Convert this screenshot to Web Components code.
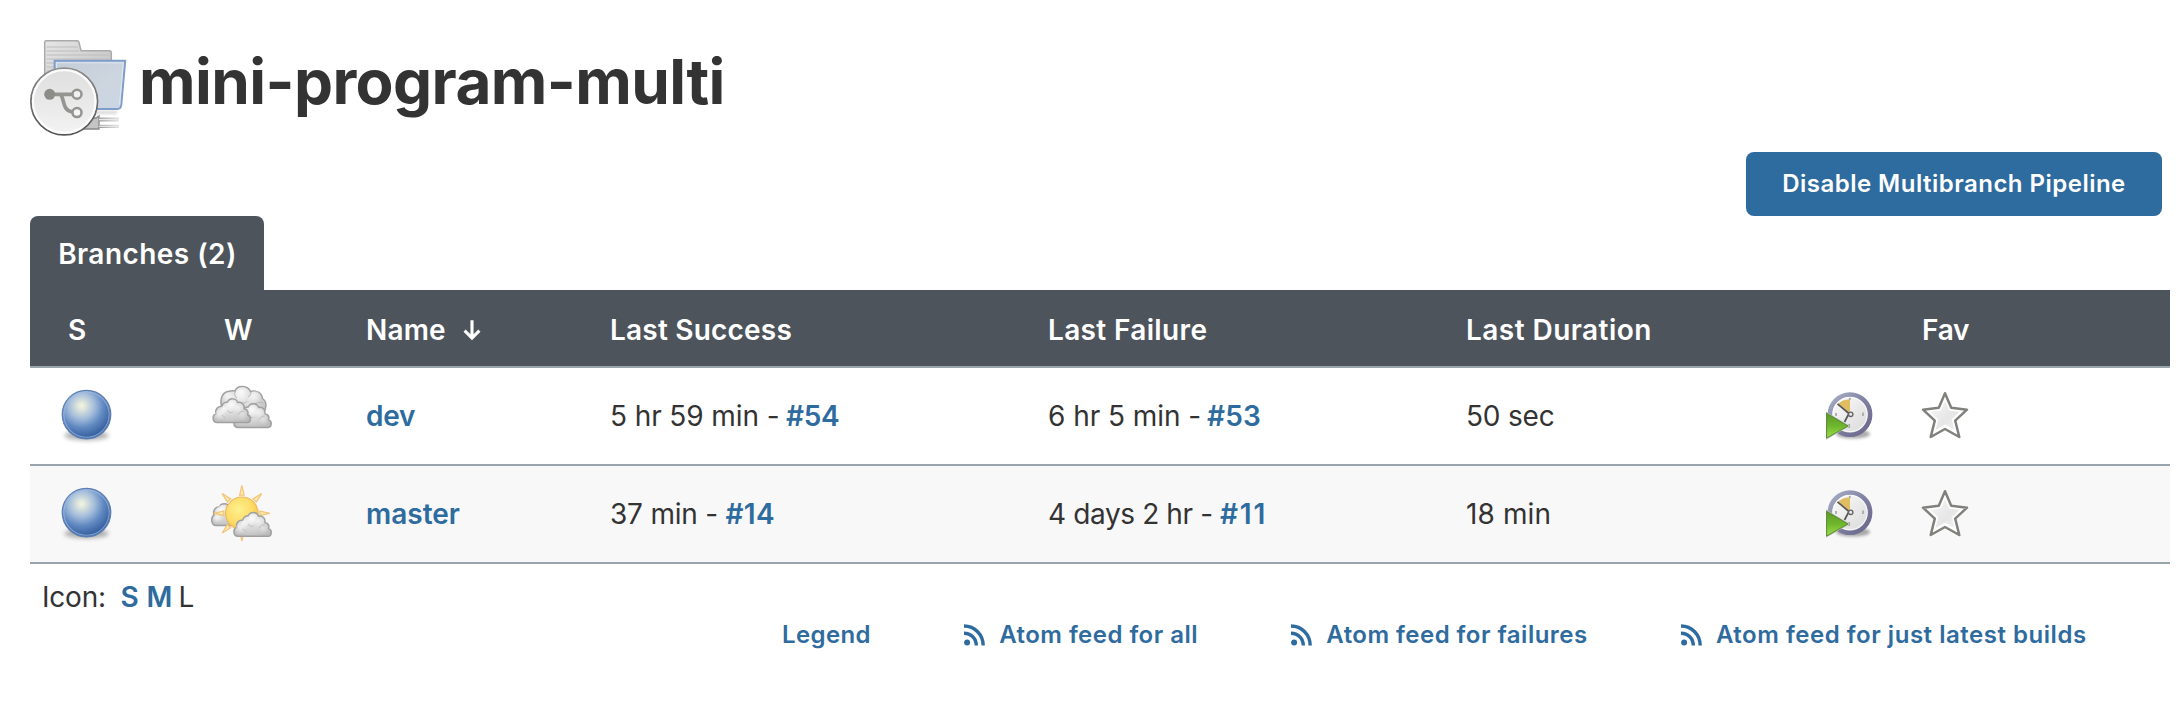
<!DOCTYPE html>
<html lang="en">
<head>
<meta charset="utf-8">
<title>mini-program-multi</title>
<style>
html, body { margin: 0; background: #fff; }
body { font-family: Inter, "Liberation Sans", sans-serif; font-size: 28px; color: #333; --link: #2e6b9e; --dark: #4d545c; --line: #98a5ad; }
</style>
</head>
<body>
<job-page></job-page>
<script>
const define = (name, html, setup) => {
  const template = document.createElement('template');
  template.innerHTML = html;
  customElements.define(name, class extends HTMLElement {
    connectedCallback() {
      if (this.shadowRoot) return;
      this.attachShadow({ mode: 'open' }).append(template.content.cloneNode(true));
      if (setup) setup(this, this.shadowRoot);
    }
  });
};

/* ---------- icons ---------- */
const icon = (name, w, h, body) => define(name,
  `<style>:host{display:block;flex:none;width:${w}px;height:${h}px}svg{display:block;overflow:visible}</style>
   <svg width="${w}" height="${h}" viewBox="0 0 ${w} ${h}" fill="none">${body}</svg>`);

icon('icon-folder', 96, 96, `
  <defs>
    <linearGradient id="back" x1="0" y1="0" x2="1" y2="1"><stop offset="0" stop-color="#e6e6e6"/><stop offset="1" stop-color="#b9b9b9"/></linearGradient>
    <linearGradient id="front" x1="0" y1="0" x2="1" y2="1"><stop offset="0" stop-color="#c4ccd8"/><stop offset=".6" stop-color="#cdd5df"/><stop offset="1" stop-color="#cad6e6"/></linearGradient>
    <linearGradient id="disc" x1="0" y1="0" x2="0" y2="1"><stop offset="0" stop-color="#dedede"/><stop offset="1" stop-color="#f3f3f3"/></linearGradient>
    <linearGradient id="rim" x1="0" y1="0" x2="0" y2="1"><stop offset="0" stop-color="#8c8c8c"/><stop offset="1" stop-color="#555"/></linearGradient>
    <linearGradient id="cable" x1="0" y1="0" x2="1" y2="0"><stop offset="0" stop-color="#999"/><stop offset="1" stop-color="#e4e4e4"/></linearGradient>
    <filter id="soft" x="-20%" y="-60%" width="140%" height="220%"><feGaussianBlur stdDeviation="1.6"/></filter>
  </defs>
  <path d="M30 71H88L86 74H34Z" fill="#777" opacity=".3" filter="url(#soft)"/>
  <path d="M14.7 60V2.2Q14.7.8 16.2.8H47Q48.6.8 49 2.4L51 10.7H79.5Q81.3 10.7 81.3 12.5V34H40V60Z" fill="url(#back)" stroke="#aaa" stroke-width="1.5"/>
  <path d="M16.5 7H48M16.5 11H49M16.5 15H79M16.5 19H79M16.5 23H26M16.5 27H26M16.5 31H24" stroke="#bdbdbd" stroke-width="1.2"/>
  <path d="M24.6 20.8H95.2L91.3 65Q90.8 69 87.5 69H24.6Z" fill="url(#front)" stroke="#7f9dcb" stroke-width="2"/>
  <path d="M26.5 62V22.8H93.2L89.6 64.6" stroke="#dfe6ef" stroke-width="1.1"/>
  <path d="M54 78H66L69 76V89H50Z" fill="#c4c4c4" stroke="#888" stroke-width="1.3"/>
  <rect x="69" y="77.500" width="20" height="4" fill="url(#cable)"/><rect x="69" y="84.800" width="20" height="3.200" fill="url(#cable)"/>
  <rect x="69" y="78.800" width="20" height="1.400" fill="#e9e9e9"/><rect x="69" y="85.700" width="20" height="1.200" fill="#e9e9e9"/>
  <circle cx="34.2" cy="61.5" r="33.3" fill="url(#disc)" stroke="url(#rim)" stroke-width="1.8"/>
  <circle cx="34.2" cy="61.5" r="31.3" stroke="#fff" stroke-width="2.2" opacity=".85"/>
  <path d="M20 54.3H42M30.500 54.5C34.500 58 32 71 42.5 72" stroke="#949490" stroke-width="3.700"/>
  <circle cx="19.7" cy="54.3" r="5.500" fill="#8c8c89"/>
  <circle cx="47" cy="54.3" r="4.5" fill="#f1f1f1" stroke="#949490" stroke-width="2.5"/>
  <circle cx="47" cy="72.6" r="4.5" fill="#f5f5f5" stroke="#949490" stroke-width="2.5"/>`);

icon('icon-ball', 64, 64, `
  <defs>
    <radialGradient id="g" cx=".4" cy=".32" r=".66"><stop offset="0" stop-color="#f5f5df"/><stop offset=".12" stop-color="#dfe6dc"/><stop offset=".4" stop-color="#a3bddb"/><stop offset=".68" stop-color="#6189c1"/><stop offset="1" stop-color="#355f9e"/></radialGradient>
    <filter id="s" x="-20%" y="-50%" width="140%" height="200%"><feGaussianBlur stdDeviation="2"/></filter>
  </defs>
  <ellipse cx="32.5" cy="51.5" rx="22" ry="5" fill="#666" opacity=".5" filter="url(#s)"/>
  <circle cx="32.5" cy="30.6" r="24.3" fill="url(#g)" stroke="#5e7fb3" stroke-width="1.2"/>
  <circle cx="32.5" cy="30.6" r="22.7" stroke="#9ebbe2" stroke-width="1.1" opacity=".7"/>`);

const cloudDefs = `
  <radialGradient id="c" cx=".42" cy=".3" r=".75"><stop offset="0" stop-color="#ececec"/><stop offset=".55" stop-color="#d6d6d6"/><stop offset="1" stop-color="#bcbcbc"/></radialGradient>
  <radialGradient id="p" cx=".4" cy=".35" r=".6"><stop offset="0" stop-color="#fff"/><stop offset="1" stop-color="#fff" stop-opacity="0"/></radialGradient>`;
/* one cumulus, 38 x 25 */
const cloud = (x, y) => `<g transform="translate(${x} ${y})">
  <path d="M4.5 24.3C-.5 24-.7 16.5 3.4 15.6C2.2 11 5.5 7.5 9.3 8.3C10.2 4 13.5 3.6 15 4C16.5-.6 23.5-.6 25 4.2C29.5 3.4 32 6.5 31.6 10.5C35.5 11 36 14.5 35 16.4C39.3 18 38.3 24 34.8 24.3Z" fill="url(#c)" stroke="#a0a09e" stroke-width="1.5"/>
  <circle cx="8" cy="17" r="6" fill="url(#p)" opacity=".6"/><circle cx="20" cy="8" r="6.5" fill="url(#p)" opacity=".8"/><circle cx="12" cy="12" r="4.5" fill="url(#p)" opacity=".7"/><circle cx="27" cy="11" r="5" fill="url(#p)" opacity=".5"/><circle cx="31" cy="18" r="5" fill="url(#p)" opacity=".35"/>
  <path d="M15 12C16 14.5 18.5 15 20 13.8M26 16C27 13.5 29 12.6 31 13.2M9 17.5C11 17 12 18.5 12 20" stroke="#bbb" stroke-width=".9"/></g>`;

icon('icon-cloudy', 64, 64, `<defs>${cloudDefs}</defs>
  <path d="M11.500 22C9.500 14 13 8 19 7.2C22 6.4 24 7 25 7C27 .8 38 .8 40.5 7.500C46 5.500 52 9 52.5 14.500C55.500 16.500 57 20 55 26L45 36H18Z" fill="url(#c)" stroke="#a0a09e" stroke-width="1.5"/>
  <circle cx="32.5" cy="10" r="7" fill="url(#p)" opacity=".8"/><circle cx="19" cy="14" r="6" fill="url(#p)" opacity=".7"/><circle cx="45" cy="14" r="7" fill="url(#p)" opacity=".7"/>
  <path d="M25 8C24 10 25 13 27 14M41 8C41 10 40 12 38 13M31 18C33 20 36 19 37 17M44 21C47 18 50 18 53 19" stroke="#b6b6b6" stroke-width="1"/>
  ${cloud(23.4, 19.2)}${cloud(2.6, 14.3)}`);

const rays = [0, 45, 90, 135, 180, 225, 270, 315].map(a =>
  `<path transform="rotate(${a} 31.9 31.3)" d="M29.6 13.2L31.9 3.4L34.2 13.2Z" fill="#fde9a5" stroke="#f2c47c" stroke-width="1.2"/>`).join('');
icon('icon-partly-sunny', 64, 64, `<defs>${cloudDefs}
    <radialGradient id="sun" cx=".4" cy=".38" r=".7"><stop offset="0" stop-color="#fff08e"/><stop offset=".6" stop-color="#fbdc66"/><stop offset="1" stop-color="#f5c04e"/></radialGradient></defs>
  <path d="M6 43.6C1 43.5.5 35 4 33.5C2.5 28 6 24.5 9.5 25C10.500 20.500 18 20.500 19.500 25L26 43.600Z" fill="url(#c)" stroke="#a0a09e" stroke-width="1.5"/>
  <circle cx="12" cy="29" r="6" fill="url(#p)" opacity=".8"/><circle cx="8" cy="37" r="5" fill="url(#p)" opacity=".7"/>
  ${rays}
  <circle cx="31.9" cy="31.3" r="16.3" fill="url(#sun)" stroke="#f1b75c" stroke-width="1.1"/>
  ${cloud(23.4, 30)}`);

icon('icon-schedule', 48, 48, `
  <defs>
    <linearGradient id="r" x1="0" y1="0" x2="1" y2="1"><stop offset="0" stop-color="#a9b0c6"/><stop offset=".5" stop-color="#8081a3"/><stop offset="1" stop-color="#686589"/></linearGradient>
    <linearGradient id="f" x1="0" y1="0" x2="1" y2="1"><stop offset="0" stop-color="#fff"/><stop offset="1" stop-color="#d6d6d6"/></linearGradient>
    <linearGradient id="t" x1="0" y1="0" x2="0" y2="1"><stop offset="0" stop-color="#5d9a2b"/><stop offset=".5" stop-color="#6fb52c"/><stop offset="1" stop-color="#9ae04a"/></linearGradient>
    <filter id="s" x="-20%" y="-60%" width="140%" height="220%"><feGaussianBlur stdDeviation="1.7"/></filter>
  </defs>
  <ellipse cx="27" cy="42" rx="17" ry="4.500" fill="#555" opacity=".5" filter="url(#s)"/>
  <circle cx="24" cy="22.600" r="20" fill="url(#f)" stroke="url(#r)" stroke-width="4.800"/>
  <circle cx="24" cy="22.600" r="17.200" stroke="#fff" stroke-width="1.200" opacity=".8"/>
  <path d="M24 21.500V7.400C19.500 7.200 15 8.800 12.300 11.500Z" fill="#dfbd60"/>
  <path d="M11.500 11.800L23 21.500L18.500 30" stroke="#555" stroke-width="1.700"/>
  <circle cx="24.700" cy="22.300" r="2.200" fill="#eee" stroke="#666" stroke-width="1.400"/>
  <path d="M37 20.500V24M23.200 32V36M10 21V24M23.800 5.800V8" stroke="#aaa" stroke-width="1.800"/>
  <path d="M0 19.500L23.800 34L0 47.700Z" fill="#b7bfb0"/>
  <path d="M.6 21.300L22 34L.6 46Z" fill="url(#t)" stroke="#55852f" stroke-width=".9"/>`);

icon('icon-star', 48, 48, `
  <defs><linearGradient id="g" x1="0" y1="0" x2="1" y2="1"><stop offset="0" stop-color="#f7f7f7"/><stop offset=".6" stop-color="#e6e6e6"/><stop offset="1" stop-color="#f2f2f2"/></linearGradient></defs>
  <path d="M23 1.200L29.200 15.800L45 17.700L33.200 28.600L37.300 45L23 37L8.700 45L12.800 28.600L1 17.700L16.800 15.800Z" fill="#fff" stroke="#80807c" stroke-width="2.500" stroke-linejoin="round"/>
  <path d="M23 9L27.200 18.500L37.500 19.800L29.800 27.300L32.500 38L23 32.500L13.500 38L16.200 27.300L8.500 19.800L18.800 18.500Z" fill="url(#g)"/>`);

icon('icon-feed', 21, 22, `
  <circle cx="3.100" cy="18.500" r="3" fill="var(--link)"/>
  <path d="M0 9.200C7 9.200 12.300 14.500 12.300 21.500M0 2C10.800 2 19.200 10.700 19.200 21.500" stroke="var(--link)" stroke-width="3.400"/>`);

icon('icon-arrow-down', 18, 20, `<path d="M9 .3V17.500M1.600 10.700L9 18.100L16.400 10.700" stroke="#fff" stroke-width="3.100"/>`);

/* ---------- text with optional tracking ---------- */
define('ui-text', `<style>:host{display:inline-block;white-space:pre}</style><slot></slot>`, el => {
  const track = el.getAttribute('track'), width = el.getAttribute('width');
  if (track) el.style.letterSpacing = track + 'px';
  if (width) el.style.width = width + 'px';
});
define('ui-link', `<style>:host{display:inline-block;white-space:pre}a{color:var(--link);font-weight:600;text-decoration:none}</style><a href="#"><slot></slot></a>`, el => {
  const track = el.getAttribute('track');
  if (track) el.style.letterSpacing = track + 'px';
});

/* ---------- page parts ---------- */
define('job-heading', `<style>
  :host{display:flex;align-items:center;height:96px}
  h1{margin:-12px 0 0 13px;font-size:62px;line-height:72px;font-weight:700;letter-spacing:-.58px;white-space:nowrap}
  </style><slot name="icon"></slot><h1><slot></slot></h1>`);

define('primary-button', `<style>
  :host{display:block}
  button{display:block;box-sizing:border-box;width:416px;height:64px;padding:0 0 1px;border:0;border-radius:8px;background:var(--link);color:#fff;font:600 24px Inter,"Liberation Sans",sans-serif;letter-spacing:.48px;white-space:nowrap}
  </style><button><slot></slot></button>`);

define('view-tab', `<style>
  :host{display:flex;align-items:center;justify-content:center;box-sizing:border-box;width:234px;height:74px;padding:1px 0 0 1px;border-radius:8px 8px 0 0;background:var(--dark);color:#fff;font-weight:600;letter-spacing:.45px;white-space:nowrap}
  </style><slot></slot>`);

const columns = `display:grid;grid-template-columns:156px 156px 244px 438px 418px 360px 96px 1fr;align-items:center;box-sizing:border-box;padding-left:24px;border-bottom:2px solid var(--line)`;
define('branch-header', `<style>
  :host{${columns};height:78px;padding-top:3px;background:var(--dark);color:#fff;font-weight:600;white-space:nowrap}
  .s{padding-left:14px}.w{padding-left:14px}.name{display:flex;align-items:center;gap:17px}
  </style>
  <div class="s">S</div><div class="w">W</div>
  <div class="name"><ui-text track=".15">Name</ui-text><icon-arrow-down></icon-arrow-down></div>
  <ui-text track=".21">Last Success</ui-text><ui-text track=".35">Last Failure</ui-text><ui-text track=".45">Last Duration</ui-text>
  <span></span><ui-text track="-.3">Fav</ui-text>`);

define('branch-row', `<style>
  :host{${columns};height:98px;background:#fff;white-space:nowrap}
  :host([alt]){background:#f8f8f8}
  </style>
  <icon-ball></icon-ball><slot name="weather"></slot><slot name="name"></slot>
  <div><slot name="success"></slot></div><div><slot name="failure"></slot></div><slot name="duration"></slot>
  <icon-schedule></icon-schedule><icon-star></icon-star>`);

define('icon-size', `<style>
  :host{display:block;padding:16px 0 1px 12px;height:34px;line-height:34px;white-space:nowrap}
  </style><ui-text track="-.2" width="78.500">Icon:</ui-text><ui-link style="width:26px">S</ui-link><ui-link style="width:32px">M</ui-link><ui-text>L</ui-text>`);

define('feed-link', `<style>
  :host{display:flex;align-items:center;gap:14px}
  </style><icon-feed></icon-feed><slot></slot>`);

define('feed-bar', `<style>
  :host{display:flex;align-items:center;gap:93.300px;margin-top:2px;padding-left:752px;height:36px;font-size:24px;line-height:36px;white-space:nowrap}
  </style><slot></slot>`);

define('job-page', `<style>
  :host{display:block;box-sizing:border-box;padding:40px 6px 0 30px}
  .actions{display:flex;justify-content:flex-end;margin:16px 8px 0 0}
  </style>
  <job-heading><icon-folder slot="icon"></icon-folder>mini-program-multi</job-heading>
  <div class="actions"><primary-button>Disable Multibranch Pipeline</primary-button></div>
  <view-tab>Branches (2)</view-tab>
  <branch-header></branch-header>
  <branch-row>
    <icon-cloudy slot="weather"></icon-cloudy>
    <ui-link slot="name" track="-.3">dev</ui-link>
    <ui-text slot="success" track="-.1" width="176">5 hr 59 min -</ui-text><ui-link slot="success" track="-.3">#54</ui-link>
    <ui-text slot="failure" track="-.05" width="159">6 hr 5 min -</ui-text><ui-link slot="failure" track=".19">#53</ui-link>
    <ui-text slot="duration" track="-.2">50 sec</ui-text>
  </branch-row>
  <branch-row alt>
    <icon-partly-sunny slot="weather"></icon-partly-sunny>
    <ui-link slot="name">master</ui-link>
    <ui-text slot="success" track="-.2" width="115.500">37 min -</ui-text><ui-link slot="success" track=".32">#14</ui-link>
    <ui-text slot="failure" track="-.38" width="172">4 days 2 hr -</ui-text><ui-link slot="failure" track="1.8">#11</ui-link>
    <ui-text slot="duration" track=".1">18 min</ui-text>
  </branch-row>
  <icon-size></icon-size>
  <feed-bar>
    <ui-link track=".37">Legend</ui-link>
    <feed-link><ui-link track=".47">Atom feed for all</ui-link></feed-link>
    <feed-link><ui-link track=".48">Atom feed for failures</ui-link></feed-link>
    <feed-link><ui-link track=".53">Atom feed for just latest builds</ui-link></feed-link>
  </feed-bar>`);
</script>
</body>
</html>
